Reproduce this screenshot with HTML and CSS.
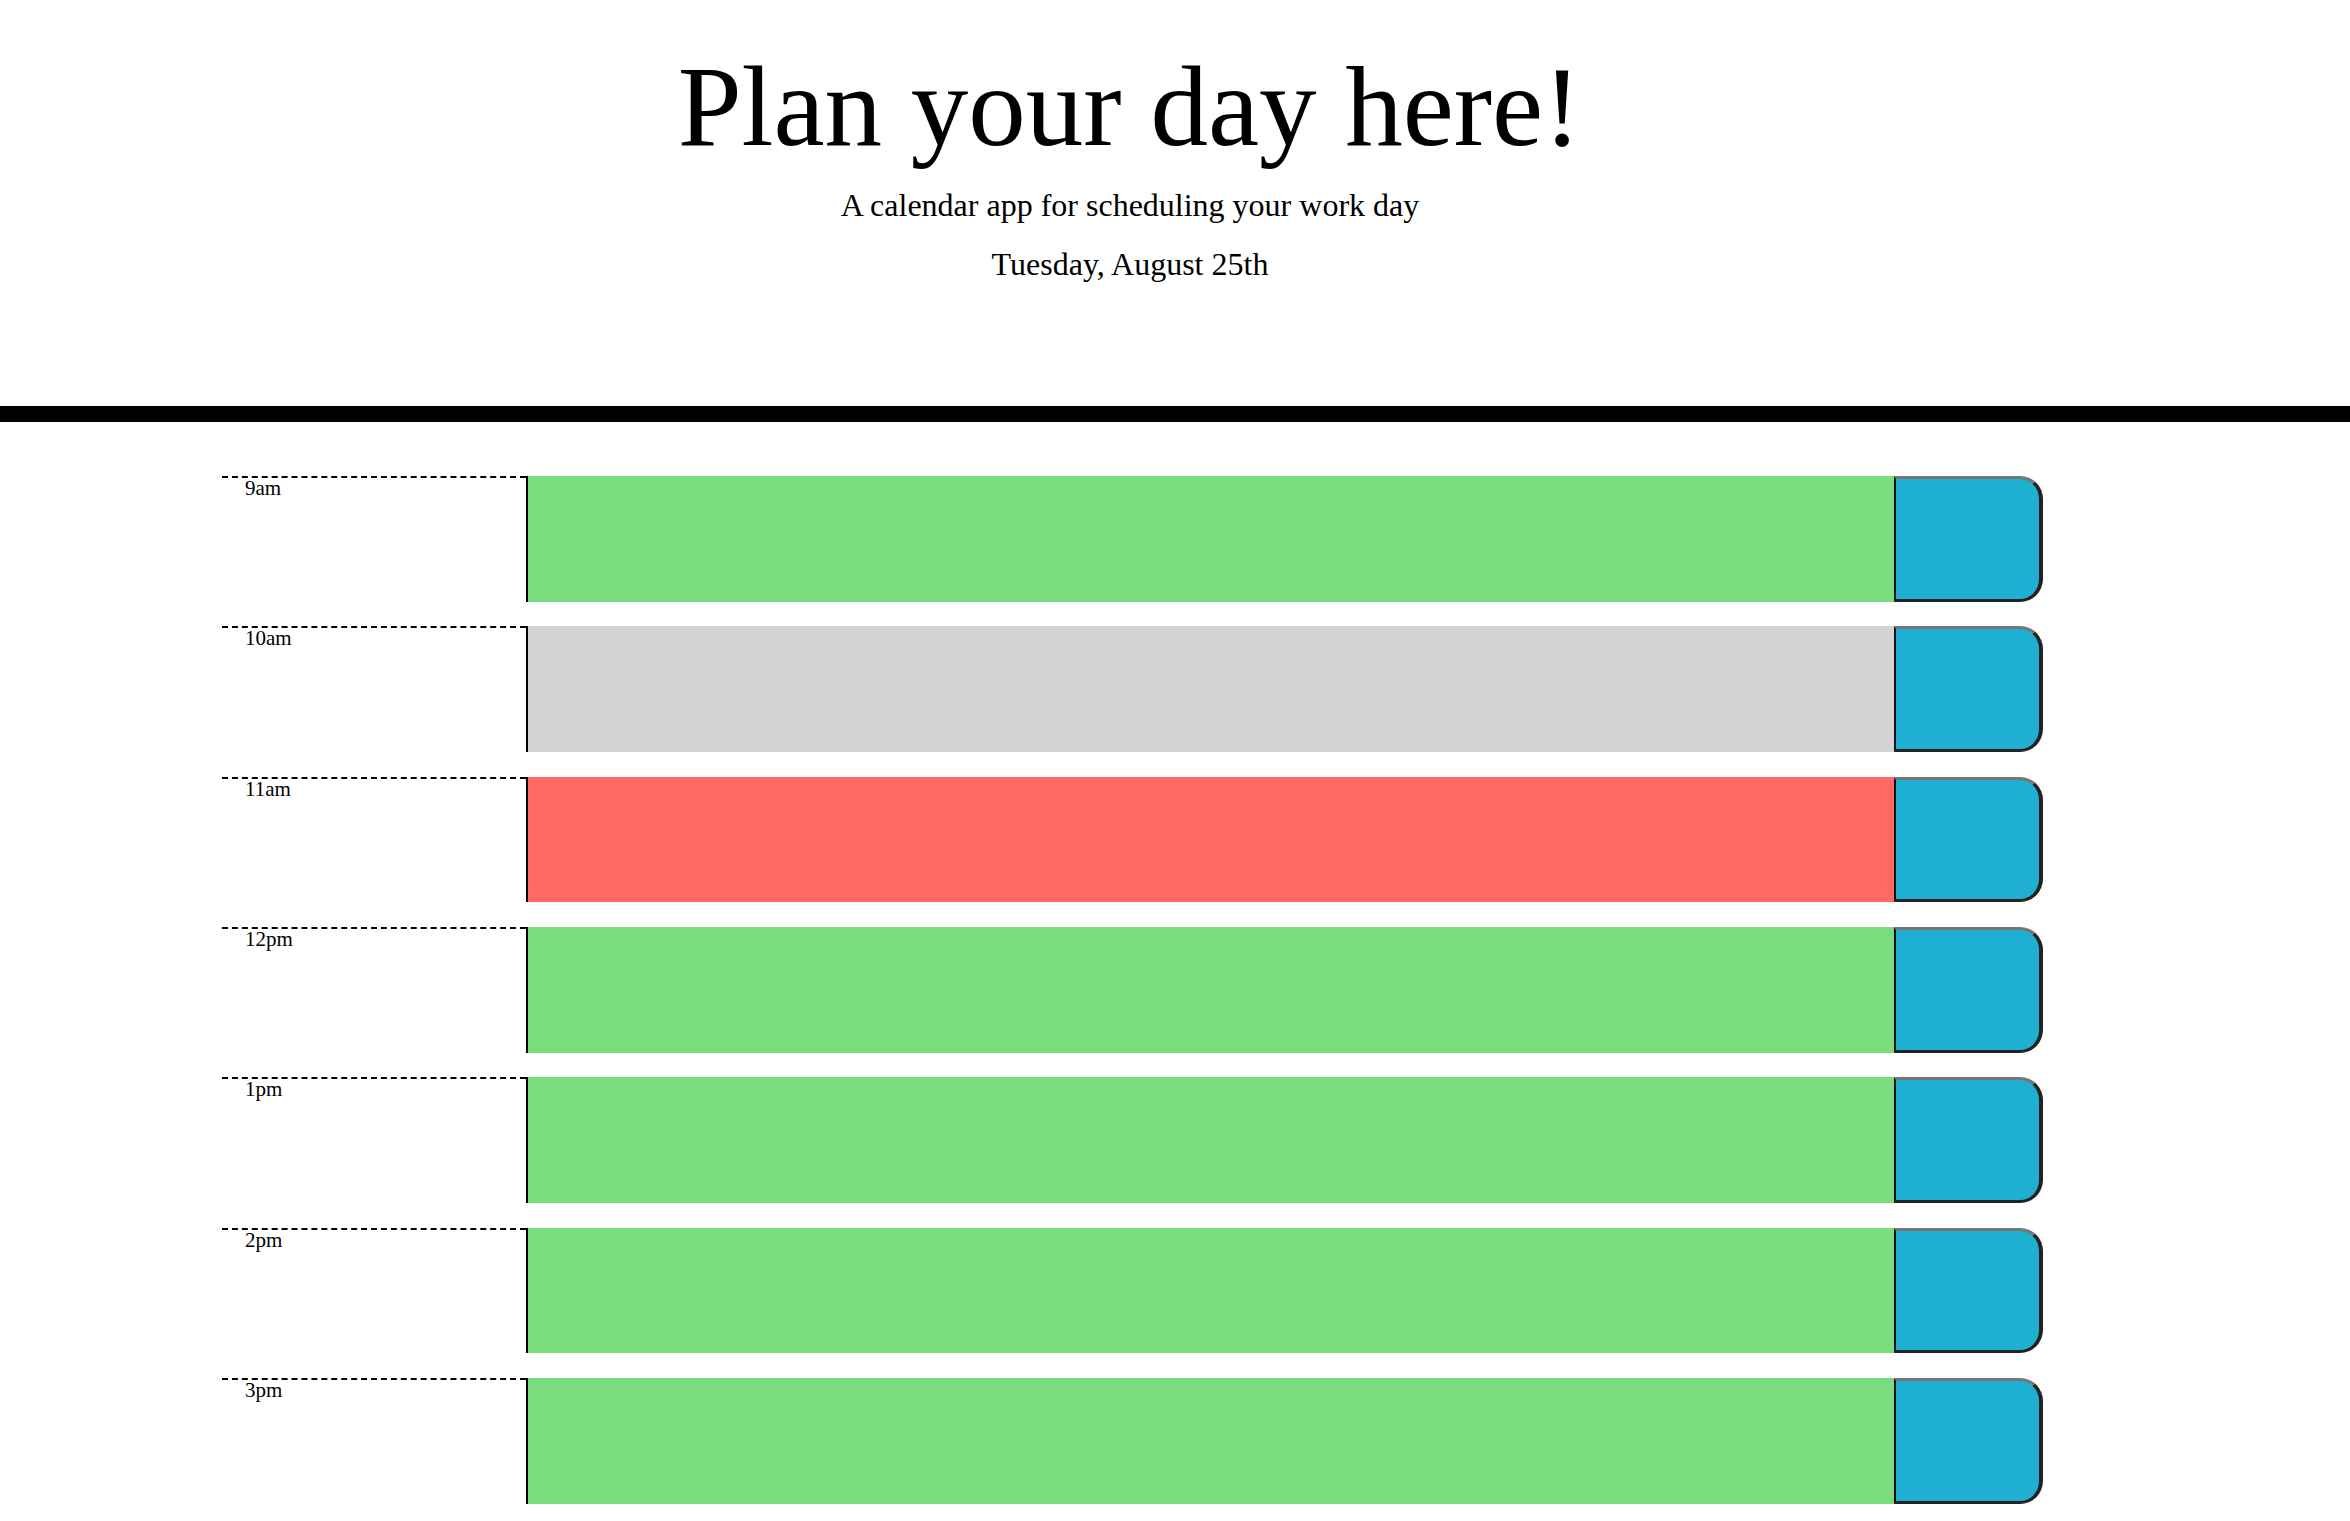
FILE: index.html
```html
<!DOCTYPE html>
<html lang="en">
<head>
<meta charset="utf-8">
<title>Work Day Scheduler</title>
<link rel="stylesheet" href="styles.css">
</head>
<body>
<header class="jumbotron">
  <h1 class="title">Plan your day here!</h1>
  <p class="lead">A calendar app for scheduling your work day</p>
  <p class="lead date">Tuesday, August 25th</p>
</header>
<main class="container">
  <div class="time-block"><div class="hour">9am</div><textarea class="description future"></textarea><button class="saveBtn" aria-label="save"></button></div>
  <div class="time-block"><div class="hour">10am</div><textarea class="description past"></textarea><button class="saveBtn" aria-label="save"></button></div>
  <div class="time-block"><div class="hour">11am</div><textarea class="description present"></textarea><button class="saveBtn" aria-label="save"></button></div>
  <div class="time-block"><div class="hour">12pm</div><textarea class="description future"></textarea><button class="saveBtn" aria-label="save"></button></div>
  <div class="time-block"><div class="hour">1pm</div><textarea class="description future"></textarea><button class="saveBtn" aria-label="save"></button></div>
  <div class="time-block"><div class="hour">2pm</div><textarea class="description future"></textarea><button class="saveBtn" aria-label="save"></button></div>
  <div class="time-block"><div class="hour">3pm</div><textarea class="description future"></textarea><button class="saveBtn" aria-label="save"></button></div>
</main>
</body>
</html>
```
FILE: styles.css
```css
html, body {
  margin: 0;
  padding: 0;
  background: #ffffff;
}

body {
  font-family: "Liberation Serif", "Times New Roman", serif;
  color: #000000;
}

.jumbotron {
  text-align: center;
  border-bottom: 16px solid #000000;
  padding: 38px 90px 122.5px 0;
}

.title {
  font-size: 115px;
  font-weight: 400;
  line-height: 1.2;
  margin: 0 0 0 -1px;
}

.lead {
  font-size: 32px;
  line-height: 40px;
  margin: 8.5px 0 0;
}

.date {
  margin-top: 19px;
}

.container {
  width: 1821px;
  margin: 54px 0 0 222px;
  display: flex;
  flex-direction: column;
  gap: 24.63px;
}

.time-block {
  display: flex;
  height: 125.7px;
}

.hour {
  box-sizing: border-box;
  width: 304px;
  flex: none;
  border-top: 2px dashed #000000;
  padding-left: 23px;
  font-size: 21px;
  line-height: 1;
}

.description {
  flex: 1;
  box-sizing: border-box;
  margin: 0;
  padding: 0;
  border: none;
  border-left: 2px solid #000000;
  resize: none;
  outline: none;
  height: 100%;
}

.future { background-color: #7bdc7d; }
.past { background-color: #d3d3d3; }
.present { background-color: #ff6a65; }

.saveBtn {
  box-sizing: border-box;
  width: 149px;
  flex: none;
  height: 100%;
  margin: 0;
  padding: 0;
  background-color: #1fafd3;
  border-style: solid;
  border-width: 3px 4px 3px 2px;
  border-color: #767676 #222222 #222222 #111111;
  border-radius: 0 23px 23px 0;
}
```
